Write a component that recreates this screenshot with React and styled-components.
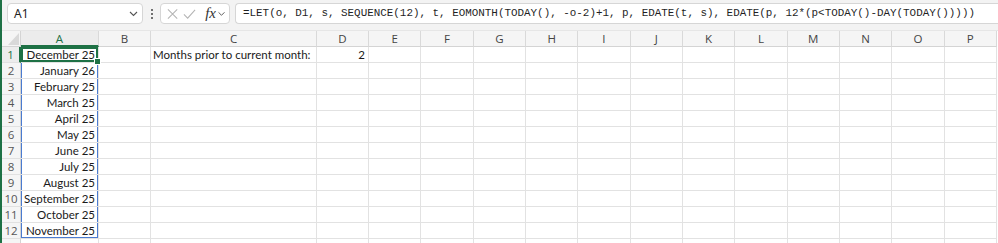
import styled, { createGlobalStyle } from "styled-components";

const GlobalStyle = createGlobalStyle`
  html, body {
    margin: 0;
    padding: 0;
    background: #ffffff;
  }
  body {
    font-family: "Noto Sans", "Open Sans", sans-serif;
    overflow: hidden;
  }
`;

const GREEN = "#1e7145";
const BLUE = "#4a7bd0";

const columns = [
  { key: "A", w: 78 },
  { key: "B", w: 52 },
  { key: "C", w: 166 },
  { key: "D", w: 52 },
  ..."EFGHIJKLMNOP".split("").map((k) => ({ key: k, w: 52.33 })),
];

const months = [
  "December 25",
  "January 26",
  "February 25",
  "March 25",
  "April 25",
  "May 25",
  "June 25",
  "July 25",
  "August 25",
  "September 25",
  "October 25",
  "November 25",
  "",
];

const FORMULA =
  "=LET(o, D1, s, SEQUENCE(12), t, EOMONTH(TODAY(), -o-2)+1, p, EDATE(t, s), EDATE(p, 12*(p<TODAY()-DAY(TODAY()))))";

function Chevron() {
  return (
    <svg width="9" height="6" viewBox="0 0 9 6">
      <polyline points="1,1 4.5,4.5 8,1" fill="none" stroke="#555" strokeWidth="1.1" />
    </svg>
  );
}

export default function App() {
  return (
    <Window>
      <GlobalStyle />
      <Toolbar>
        <NameBox>
          <span>A1</span>
          <Chevron />
        </NameBox>
        <Grip>
          <i />
          <i />
          <i />
        </Grip>
        <FormulaButtons>
          <svg width="12" height="12" viewBox="0 0 12 12">
            <path d="M1 1 L11 11 M11 1 L1 11" stroke="#b4b4b4" strokeWidth="1.1" />
          </svg>
          <svg width="14" height="12" viewBox="0 0 14 12">
            <polyline points="1,6.5 5,10.5 13,1.5" fill="none" stroke="#b4b4b4" strokeWidth="1.1" />
          </svg>
          <Fx>fx</Fx>
          <SmallChevron>
            <Chevron />
          </SmallChevron>
        </FormulaButtons>
        <FormulaInput>{FORMULA}</FormulaInput>
      </Toolbar>

      <Sheet $cols={columns.map((c) => `${c.w}px`).join(" ")}>
        <Corner>
          <svg width="11" height="12" viewBox="0 0 11 12">
            <polygon points="11,0 11,12 0,12" fill="#d9d9d9" />
          </svg>
        </Corner>
        {columns.map((c) => (
          <ColHeader key={c.key} $active={c.key === "A"}>
            {c.key}
          </ColHeader>
        ))}

        {months.map((m, i) => {
          const row = i + 1;
          return [
            <RowHeader key={`r${row}`} $active={row === 1}>
              {row <= 12 ? row : ""}
            </RowHeader>,
            ...columns.map((c) => {
              let text = "";
              let align = "left";
              if (c.key === "A") {
                text = m;
                align = "right";
              }
              if (row === 1 && c.key === "C") text = "Months prior to current month:";
              if (row === 1 && c.key === "D") {
                text = "2";
                align = "right";
              }
              const spill = c.key === "A" && row <= 12;
              return (
                <Cell
                  key={`${c.key}${row}`}
                  $align={align}
                  $spill={spill}
                  $spillEnd={c.key === "A" && row === 12}
                  $active={c.key === "A" && row === 1}
                >
                  {text}
                  {c.key === "A" && row === 1 && <FillHandle />}
                </Cell>
              );
            }),
          ];
        })}
      </Sheet>
    </Window>
  );
}

const Window = styled.div`
  width: 998px;
  height: 243px;
  overflow: hidden;
  box-sizing: border-box;
  border-left: 2px solid ${GREEN};
  background: #ffffff;
`;

const Toolbar = styled.div`
  height: 31px;
  box-sizing: border-box;
  background: #f3f3f3;
  display: flex;
  align-items: flex-start;
  padding: 3px 0 0 5px;
  border-bottom: 1px solid #e6e6e6;
`;

const NameBox = styled.div`
  width: 136px;
  height: 21px;
  box-sizing: border-box;
  background: #ffffff;
  border: 1px solid #d6d6d6;
  border-radius: 4px;
  display: flex;
  align-items: center;
  justify-content: space-between;
  padding: 0 4px 0 6px;
  font-size: 12px;
  color: #222;
`;

const Grip = styled.div`
  width: 17px;
  height: 21px;
  display: flex;
  flex-direction: column;
  align-items: center;
  justify-content: center;
  gap: 2px;

  i {
    display: block;
    width: 2px;
    height: 2px;
    background: #444;
    border-radius: 1px;
  }
`;

const FormulaButtons = styled.div`
  width: 70px;
  height: 21px;
  box-sizing: border-box;
  background: #ffffff;
  border: 1px solid #d6d6d6;
  border-radius: 4px;
  display: flex;
  align-items: center;
  padding: 0 3px 0 6px;
  gap: 5px;
`;

const Fx = styled.span`
  font-family: "Liberation Serif", serif;
  font-style: italic;
  font-size: 15px;
  color: #333;
  margin-left: 4px;
  line-height: 1;
`;

const SmallChevron = styled.span`
  display: flex;
  margin-left: -4px;
  transform: scale(0.85);
`;

const FormulaInput = styled.div`
  flex: 1;
  margin-left: 5px;
  height: 21px;
  box-sizing: border-box;
  background: #ffffff;
  border: 1px solid #d6d6d6;
  border-right: none;
  border-radius: 4px 0 0 4px;
  padding: 0 0 0 7px;
  font-family: "Liberation Mono", "DejaVu Sans Mono", monospace;
  font-size: 10.9px;
  line-height: 19px;
  color: #1f1f1f;
  white-space: nowrap;
  overflow: hidden;
`;

const Sheet = styled.div`
  display: grid;
  grid-template-columns: 19px ${(p) => p.$cols};
  grid-template-rows: 16px;
  grid-auto-rows: 16px;
`;

const Corner = styled.div`
  background: #f5f5f5;
  border-right: 1px solid #d4d4d4;
  border-bottom: 1px solid #d4d4d4;
  box-sizing: border-box;
  display: flex;
  align-items: flex-end;
  justify-content: flex-end;
  padding: 0 1px 1px 0;
`;

const ColHeader = styled.div`
  box-sizing: border-box;
  background: ${(p) => (p.$active ? "#ececec" : "#f5f5f5")};
  border-right: 1px solid #d9d9d9;
  border-bottom: ${(p) => (p.$active ? `2px solid ${GREEN}` : "1px solid #d4d4d4")};
  color: ${(p) => (p.$active ? GREEN : "#444")};
  font-family: "Open Sans", "Noto Sans", sans-serif;
  font-size: 11.5px;
  line-height: 16px;
  text-align: center;
`;

const RowHeader = styled.div`
  box-sizing: border-box;
  background: ${(p) => (p.$active ? "#ececec" : "#f5f5f5")};
  border-right: ${(p) => (p.$active ? `2px solid ${GREEN}` : "1px solid #d4d4d4")};
  border-bottom: 1px solid #e1e1e1;
  color: ${(p) => (p.$active ? GREEN : "#555")};
  font-family: "Open Sans", "Noto Sans", sans-serif;
  font-size: 11.5px;
  line-height: 15px;
  text-align: center;
`;

const Cell = styled.div`
  position: relative;
  box-sizing: border-box;
  border-right: 1px solid #e2e2e2;
  border-bottom: 1px solid #e2e2e2;
  padding: 0 3px 0 2px;
  font-family: Lato, "Liberation Sans", sans-serif;
  font-size: 11.5px;
  line-height: 16px;
  color: #1a1a1a;
  white-space: nowrap;
  text-align: ${(p) => p.$align};
  box-shadow: ${(p) =>
    p.$active
      ? `inset 0 0 0 2px ${GREEN}`
      : p.$spill
      ? `inset 1px 0 0 ${BLUE}, inset -1px 0 0 ${BLUE}${p.$spillEnd ? `, inset 0 -1px 0 ${BLUE}` : ""}`
      : "none"};
`;

const FillHandle = styled.span`
  position: absolute;
  right: -3px;
  bottom: -3px;
  width: 5px;
  height: 5px;
  background: ${GREEN};
  border: 1px solid #ffffff;
  z-index: 2;
`;
